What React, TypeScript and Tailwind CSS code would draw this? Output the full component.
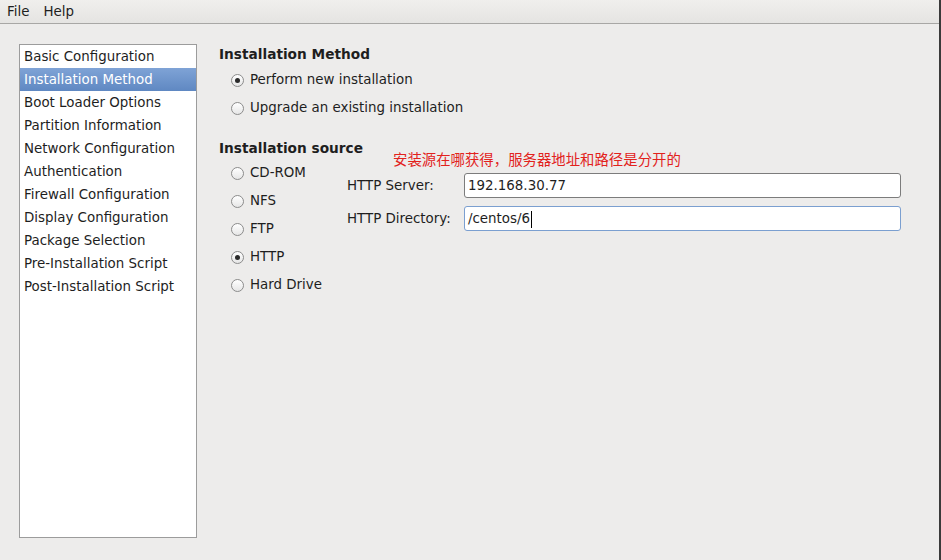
import React from "react";

const font = { fontFamily: '"DejaVu Sans", "Noto Sans CJK SC", sans-serif' };

function Radio({ checked }: { checked?: boolean }) {
  return (
    <span className="flex h-[13px] w-[13px] items-center justify-center rounded-full border border-[#8c8c8c] bg-gradient-to-b from-white to-[#e6e6e6]">
      {checked && <span className="h-[5px] w-[5px] rounded-full bg-[#2a2a2a]" />}
    </span>
  );
}

function RadioRow({ label, checked }: { label: string; checked?: boolean }) {
  return (
    <div className="flex h-[28px] items-center gap-[6px]">
      <Radio checked={checked} />
      <span>{label}</span>
    </div>
  );
}

const items = [
  "Basic Configuration",
  "Installation Method",
  "Boot Loader Options",
  "Partition Information",
  "Network Configuration",
  "Authentication",
  "Firewall Configuration",
  "Display Configuration",
  "Package Selection",
  "Pre-Installation Script",
  "Post-Installation Script",
];

export default function App() {
  return (
    <div
      className="flex h-[560px] w-[941px] flex-col overflow-hidden border-r-2 border-[#3a3a3a] bg-[#edeceb] text-[13.4px] text-[#1e1e1e]"
      style={font}
    >
      <div className="flex h-[24px] shrink-0 items-center gap-[14px] border-b border-[#a8a7a5] bg-gradient-to-b from-[#f0efed] to-[#e5e4e2] pl-[7px] pt-[2px]">
        <span>File</span>
        <span>Help</span>
      </div>
      <div className="flex pl-[19px] pt-[20px]">
        <div className="h-[494px] w-[178px] border border-[#9c9c9c] bg-white">
          {items.map((it, i) => (
            <div
              key={it}
              className={
                i === 1
                  ? "flex h-[23px] items-center bg-gradient-to-b from-[#7fa3d6] to-[#5f88c2] pl-[4px] pt-[2px] text-white"
                  : "flex h-[23px] items-center pl-[4px] pt-[2px]"
              }
            >
              {it}
            </div>
          ))}
        </div>
        <div className="ml-[22px] flex flex-col">
          <div className="h-[20px] text-[13.7px] font-bold leading-[20px]">Installation Method</div>
          <div className="mt-[2px] flex flex-col pl-[12px]">
            <RadioRow label="Perform new installation" checked />
            <RadioRow label="Upgrade an existing installation" />
          </div>
          <div className="mt-[16px] h-[20px] text-[13.7px] font-bold leading-[20px]">Installation source</div>
          <div className="mt-px flex">
            <div className="flex w-[128px] flex-col pl-[12px]">
              <RadioRow label="CD-ROM" />
              <RadioRow label="NFS" />
              <RadioRow label="FTP" />
              <RadioRow label="HTTP" checked />
              <RadioRow label="Hard Drive" />
            </div>
            <div className="-mt-[7px] flex flex-col">
              <div className="h-[16px] pl-[46px] text-[14.4px] leading-[16px] text-[#e2221c]">
                安装源在哪获得，服务器地址和路径是分开的
              </div>
              <div className="mt-[5px] flex items-center">
                <span className="w-[117px] pt-[2px]">HTTP Server:</span>
                <div className="flex h-[25px] w-[437px] items-center rounded-[3px] border border-[#7c7c7c] bg-white pl-[3px] pt-[2px]">
                  192.168.30.77
                </div>
              </div>
              <div className="mt-[8px] flex items-center">
                <span className="w-[117px] pt-[2px]">HTTP Directory:</span>
                <div className="flex h-[25px] w-[437px] items-center rounded-[3px] border border-[#7b9fd0] bg-white pl-[3px] pt-[2px]">
                  /centos/6
                  <span className="ml-px h-[17px] w-px bg-black" />
                </div>
              </div>
            </div>
          </div>
        </div>
      </div>
    </div>
  );
}
